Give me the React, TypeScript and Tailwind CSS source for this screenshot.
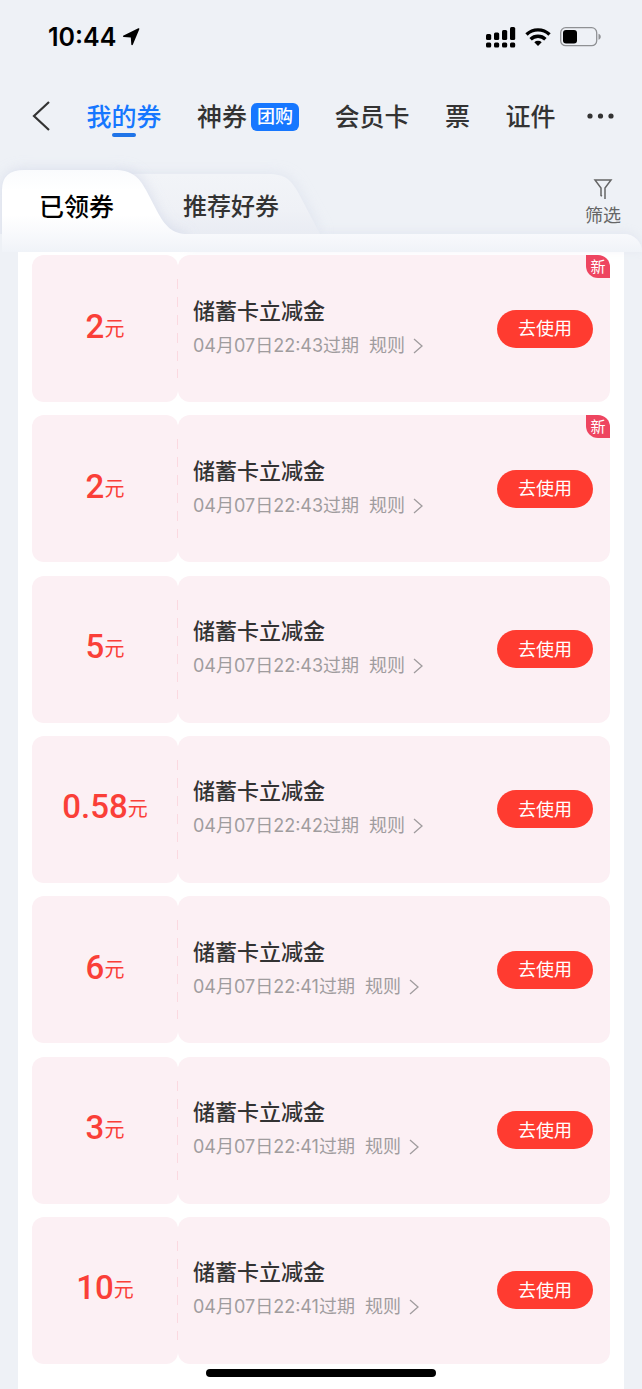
const cjk = "font-['Inter','Noto_Sans_CJK_SC',sans-serif]";

type Coupon = { amount: string; expires: string; isNew?: boolean };

const coupons: Coupon[] = [
  { amount: "2", expires: "04月07日22:43过期", isNew: true },
  { amount: "2", expires: "04月07日22:43过期", isNew: true },
  { amount: "5", expires: "04月07日22:43过期" },
  { amount: "0.58", expires: "04月07日22:42过期" },
  { amount: "6", expires: "04月07日22:41过期" },
  { amount: "3", expires: "04月07日22:41过期" },
  { amount: "10", expires: "04月07日22:41过期" },
];

function StatusBar() {
  return (
    <header className="flex h-[74px] items-center justify-between pr-10 pl-12 text-black">
      <div className="flex items-center gap-1.5">
        <span className="text-[25px] leading-8 font-semibold">10:44</span>
        <svg width="18" height="18" viewBox="0 0 18 18" aria-hidden="true">
          <path
            d="M17.300 1.200 10.900 16.600C10.500 17.500 9.400 17.400 9.300 16.400L8.800 9.600 1.900 9.100C.700 9 .600 7.900 1.600 7.500L16.300.3C17.100-.1 17.600.5 17.300 1.200Z"
            fill="currentColor"
          />
        </svg>
      </div>
      <div className="flex items-center gap-[9px]">
        <svg width="30" height="21" viewBox="0 0 30 21" fill="currentColor" aria-hidden="true">
          <rect x="0" y="7" width="5.200" height="6" rx="1.500" />
          <rect x="8" y="5.500" width="5.200" height="7.500" rx="1.500" />
          <rect x="16" y="3" width="5.200" height="10" rx="1.500" />
          <rect x="24" y="0" width="5.200" height="13" rx="1.500" />
          <rect x="0" y="15.500" width="5.200" height="5" rx="1.500" />
          <rect x="8" y="15.500" width="5.200" height="5" rx="1.500" />
          <rect x="16" y="15.500" width="5.200" height="5" rx="1.500" />
          <rect x="24" y="15.500" width="5.200" height="5" rx="1.500" />
        </svg>
        <svg width="26" height="20" viewBox="0 0 26 20" fill="none" stroke="currentColor" strokeWidth="3.400" aria-hidden="true">
          <path d="M1.500 7.500a16.500 16.500 0 0 1 23 0" />
          <path d="M5.600 12.200a10.600 10.600 0 0 1 14.800 0" />
          <path d="m13 19-3.700-3.700a5.500 5.500 0 0 1 7.400 0Z" fill="currentColor" stroke="none" />
        </svg>
        <svg width="42" height="20" viewBox="0 0 42 20" aria-hidden="true">
          <rect x=".7" y=".7" width="36" height="18" rx="5" fill="none" stroke="#8f9194" strokeWidth="1.300" />
          <rect x="3" y="3" width="14" height="13.500" rx="3" fill="currentColor" />
          <path d="M38.500 6.700c3 1 3 5 0 6Z" fill="#8f9194" />
        </svg>
      </div>
    </header>
  );
}

function NavBar() {
  const item = "pt-0.5 text-[25px] leading-9 font-medium whitespace-nowrap";
  return (
    <nav className="flex h-[84px] items-center justify-between pr-7 pl-8 text-[#333]">
      <button type="button" aria-label="返回" className="pr-px">
        <svg width="18" height="30" viewBox="0 0 18 30" fill="none" stroke="currentColor" strokeWidth="2.200" aria-hidden="true">
          <path d="M17 1 2 15l15 14" />
        </svg>
      </button>
      <a href="#coupons" aria-current="page" className={`${item} relative text-[#1677ff]`}>
        我的券
        <span className="absolute -bottom-0.5 left-1/2 h-1 w-6 -translate-x-1/2 rounded-full bg-[#1f74e8]" />
      </a>
      <a href="#deals" className={`${item} flex items-center gap-1`}>
        神券
        <span className="rounded-md bg-[#1677ff] px-1.5 text-[18px] leading-7 text-white">团购</span>
      </a>
      <a href="#member" className={item}>会员卡</a>
      <a href="#tickets" className={item}>票</a>
      <a href="#documents" className={item}>证件</a>
      <button type="button" aria-label="更多" className="-ml-1">
        <svg width="27" height="6" viewBox="0 0 27 6" fill="currentColor" aria-hidden="true">
          <circle cx="3" cy="3" r="2.600" />
          <circle cx="13.500" cy="3" r="2.600" />
          <circle cx="24" cy="3" r="2.600" />
        </svg>
      </button>
    </nav>
  );
}

function TabShapes() {
  return (
    <svg className="absolute bottom-0 left-0" width="360" height="104" viewBox="0 0 360 104" aria-hidden="true">
      <defs>
        <linearGradient id="front" x1="0" y1="0" x2="0" y2="1">
          <stop offset="0" stopColor="#fafbfd" />
          <stop offset=".25" stopColor="#ffffff" />
          <stop offset=".55" stopColor="#ffffff" />
          <stop offset=".78" stopColor="#f8f9fc" />
          <stop offset="1" stopColor="#f0f3f8" />
        </linearGradient>
        <linearGradient id="back" x1="0" y1="0" x2="0" y2="1">
          <stop offset="0" stopColor="#f2f4f8" />
          <stop offset=".6" stopColor="#eff1f6" />
          <stop offset="1" stopColor="#e9ecf3" />
        </linearGradient>
        <filter id="glow" x="-20%" y="-30%" width="140%" height="150%">
          <feGaussianBlur stdDeviation="7" />
        </filter>
        <clipPath id="above">
          <rect width="360" height="86" />
        </clipPath>
      </defs>
      <g clipPath="url(#above)">
        <path d="M120 26H270C288 26 292 32 300 46L322 86H120Z" fill="#dce1ed" opacity=".8" filter="url(#glow)" />
        <path d="M120 26H268C286 26 291 32 299 46L320 86H120Z" fill="url(#back)" />
        <path d="M2 104V44Q2 22 24 22H116C134 22 140 29 147 43L157 64C164 78 172 86 186 86V104Z" fill="#d3d9e8" opacity=".85" filter="url(#glow)" />
      </g>
      <path d="M2 104V42Q2 22 24 22H114C132 22 139 29 146 42L157 63C165 78 172 86 188 86V104Z" fill="url(#front)" />
    </svg>
  );
}

function CouponTabs() {
  return (
    <div className="relative pt-3">
      <TabShapes />
      <div className="relative flex h-16 items-center">
        <div role="tablist" className="flex flex-1 gap-[69px] pt-2.5 pl-[39px] text-[25px] leading-9 whitespace-nowrap">
          <button type="button" role="tab" aria-selected="true" className="font-medium text-black">
            已领券
          </button>
          <button type="button" role="tab" aria-selected="false" className="text-[24px] font-medium text-[#333]">
            推荐好券
          </button>
        </div>
        <button type="button" className="mr-[21px] flex flex-col items-center gap-0.5 pt-1 text-[#666]">
          <svg width="20" height="22" viewBox="0 0 20 22" fill="none" stroke="currentColor" strokeWidth="1.500" aria-hidden="true">
            <path d="M12 21V10l6-8H2l6 8v7.500l1 .5" />
          </svg>
          <span className="text-[18px] leading-7">筛选</span>
        </button>
      </div>
      <div className="ml-[188px] h-[18px] rounded-tr-[18px] bg-linear-to-b from-[#f8f9fc] to-[#f0f3f8] shadow-[0_-2px_8px_rgba(200,208,226,0.25)]" />
    </div>
  );
}

function CouponCard({ amount, expires, isNew }: Coupon) {
  return (
    <li className="relative flex h-[147px]">
      <div className="flex w-[146px] items-center justify-center rounded-xl bg-[#fcf0f4] text-[#fa3f38]">
        <p className="flex items-center pb-1">
          <span className="font-['Roboto',sans-serif] text-[33px] leading-10 font-medium">{amount}</span>
          <span className="pt-1 text-[20px] leading-8">元</span>
        </p>
      </div>
      <div className="flex flex-1 items-center justify-between rounded-xl bg-[#fcf0f4] pr-[17px] pl-[15px]">
        <div className="pb-0.5 whitespace-nowrap">
          <h2 className="text-[22px] leading-9 font-medium text-[#333]">储蓄卡立减金</h2>
          <p className="flex items-center text-[18px] leading-[34px] text-[#a09c9e]">
            <span>{expires}</span>
            <a href="#rules" className="ml-2.5 flex items-center gap-2">
              规则
              <svg width="10" height="16" viewBox="0 0 10 16" fill="none" stroke="currentColor" strokeWidth="1.300" aria-hidden="true">
                <path d="m1 1 8 7-8 7" />
              </svg>
            </a>
          </p>
        </div>
        <button type="button" className="h-[38px] w-24 rounded-full bg-[#ff3b30] pt-px text-[18px] leading-7 text-white">
          去使用
        </button>
      </div>
      <span className="absolute top-6 bottom-6 left-[145px] w-px bg-[repeating-linear-gradient(to_bottom,#fbd9e0_0_10px,transparent_10px_18px)]" />
      {isNew && (
        <span className="absolute top-0 right-0 w-6 rounded-tr-xl rounded-bl-xl bg-[#ee4560] text-center text-[15px] leading-[23px] text-white">
          新
        </span>
      )}
    </li>
  );
}

export default function App() {
  return (
    <div lang="zh-CN" className={`${cjk} flex min-h-screen flex-col bg-[#eef1f6]`}>
      <StatusBar />
      <NavBar />
      <CouponTabs />
      <main className="mx-[18px] flex flex-1 flex-col bg-white px-3.5 pt-[3px] pb-[25px]">
        <ul className="flex flex-1 flex-col justify-between gap-3">
          {coupons.map((coupon, i) => (
            <CouponCard key={i} {...coupon} />
          ))}
        </ul>
      </main>
      <div className="fixed bottom-3 left-1/2 h-2 w-[230px] -translate-x-1/2 rounded-full bg-black" />
    </div>
  );
}
